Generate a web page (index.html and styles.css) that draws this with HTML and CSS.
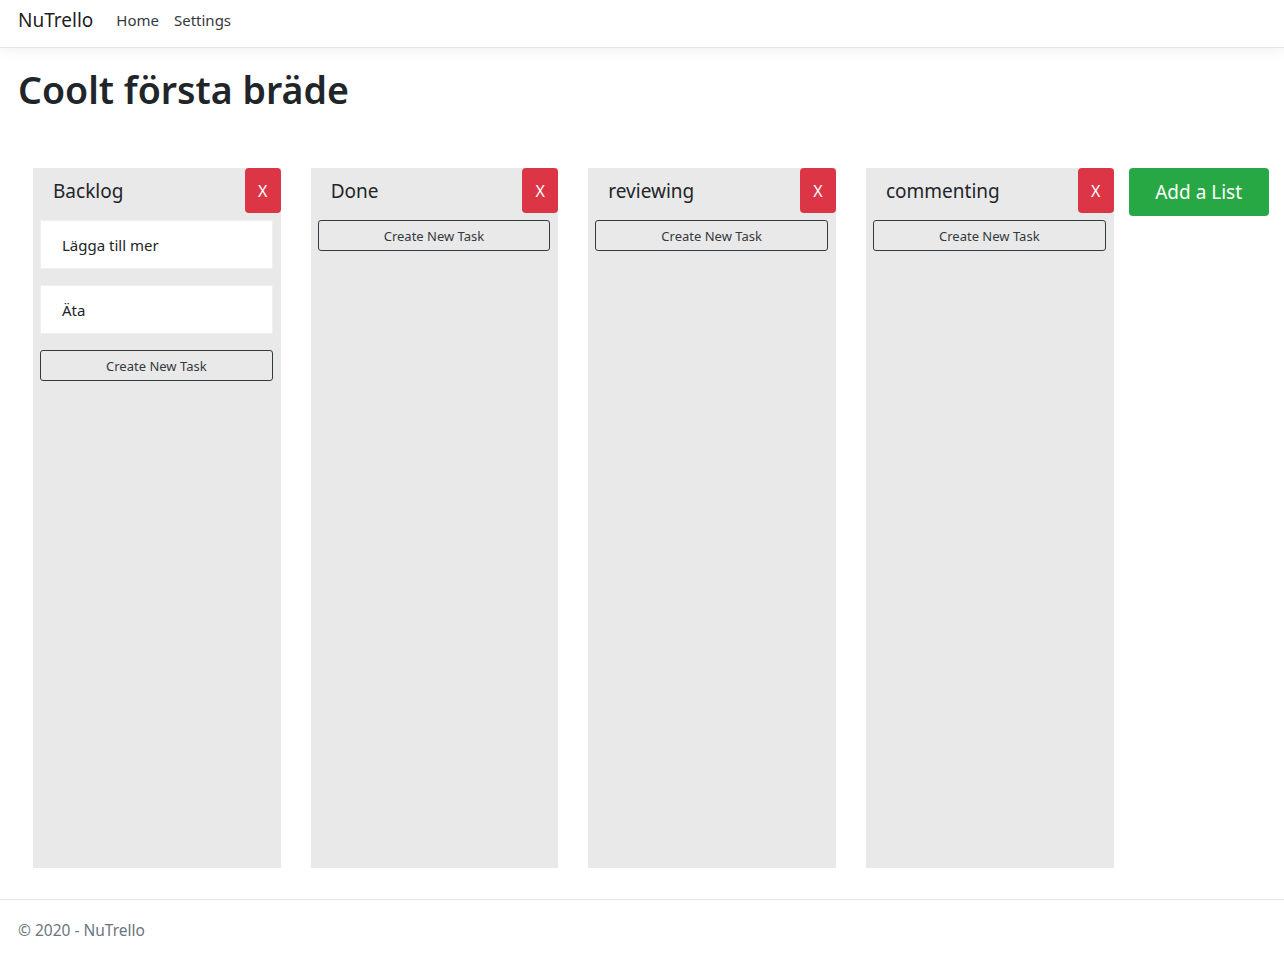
FILE: index.html
```html
<!DOCTYPE html>
<html lang="sv">
<head>
<meta charset="utf-8">
<title>NuTrello</title>
<link rel="stylesheet" href="styles.css">
</head>
<body>
<header class="navbar">
  <a class="brand" href="#">NuTrello</a>
  <nav class="nav">
    <a class="nav-link" href="#">Home</a>
    <a class="nav-link" href="#">Settings</a>
  </nav>
</header>
<main class="main">
  <h1 class="board-title">Coolt första bräde</h1>
  <div class="board">
    <section class="list">
      <div class="list-header">
        <h2 class="list-title">Backlog</h2>
        <button class="btn-delete">X</button>
      </div>
      <div class="list-body">
        <div class="card">Lägga till mer</div>
        <div class="card">Äta</div>
        <button class="btn-create">Create New Task</button>
      </div>
    </section>
    <section class="list">
      <div class="list-header">
        <h2 class="list-title">Done</h2>
        <button class="btn-delete">X</button>
      </div>
      <div class="list-body">
        <button class="btn-create">Create New Task</button>
      </div>
    </section>
    <section class="list">
      <div class="list-header">
        <h2 class="list-title">reviewing</h2>
        <button class="btn-delete">X</button>
      </div>
      <div class="list-body">
        <button class="btn-create">Create New Task</button>
      </div>
    </section>
    <section class="list">
      <div class="list-header">
        <h2 class="list-title">commenting</h2>
        <button class="btn-delete">X</button>
      </div>
      <div class="list-body">
        <button class="btn-create">Create New Task</button>
      </div>
    </section>
    <button class="btn-add">Add a List</button>
  </div>
</main>
<footer class="footer">© 2020 - NuTrello</footer>
</body>
</html>
```
FILE: styles.css
```css
* { box-sizing: border-box; }
html, body { margin: 0; padding: 0; }
body {
  font-family: "Noto Sans", "Open Sans", sans-serif;
  font-size: 16px;
  color: #212529;
  background: #fff;
}
.navbar {
  height: 48px;
  display: flex;
  align-items: center;
  padding: 0 15px 8px 18px;
  border-bottom: 1px solid #e5e5e5;
  box-shadow: 0 4px 12px rgba(0,0,0,.05);
}
.brand {
  font-size: 19px;
  color: rgba(0,0,0,.9);
  text-decoration: none;
  margin-right: 15px;
}
.nav { display: flex; }
.nav-link {
  font-size: 15px;
  color: #343a40;
  text-decoration: none;
  padding: 0 8px;
}
.nav-link + .nav-link { padding-left: 7px; }
.main { padding: 0 18px; }
.board-title {
  margin: 18px 0 0;
  font-size: 37.5px;
  font-weight: 600;
  line-height: 48px;
}
.board {
  display: flex;
  align-items: flex-start;
  gap: 30px;
  margin-top: 54px;
  padding-left: 15px;
}
.list {
  width: 247.67px;
  height: 700px;
  background: #e9e9e9;
  flex: none;
}
.list-header {
  display: flex;
  justify-content: space-between;
  align-items: center;
  height: 45px;
}
.list-title {
  margin: 0 0 0 20px;
  font-size: 19px;
  font-weight: 400;
}
.btn-delete {
  width: 36px;
  height: 45px;
  border: none;
  border-radius: 4px;
  background: #dc3545;
  color: #fff;
  font-family: inherit;
  font-size: 16px;
  padding: 0;
}
.list-body {
  display: flex;
  flex-direction: column;
  padding: 7px 8px 0 7px;
  gap: 16px;
}
.card {
  flex: none;
  height: 49px;
  background: #fff;
  border: 1px solid #efefef;
  display: flex;
  align-items: center;
  padding-left: 21px;
  font-size: 15px;
}
.btn-create {
  flex: none;
  height: 31px;
  border: 1px solid #343a40;
  border-radius: 3px;
  background: transparent;
  color: #343a40;
  font-family: inherit;
  font-size: 13px;
  padding: 0;
}
.btn-add {
  flex: none;
  margin-left: -15px;
  width: 140px;
  height: 48px;
  border: none;
  border-radius: 4px;
  background: #28a745;
  color: #fff;
  font-family: inherit;
  font-size: 19px;
  padding: 0;
}
.footer {
  margin-top: 31px;
  border-top: 1px solid #e5e5e5;
  padding: 2px 18px 0;
  height: 58px;
  display: flex;
  align-items: center;
  color: #6c757d;
  font-size: 15.5px;
}
```
